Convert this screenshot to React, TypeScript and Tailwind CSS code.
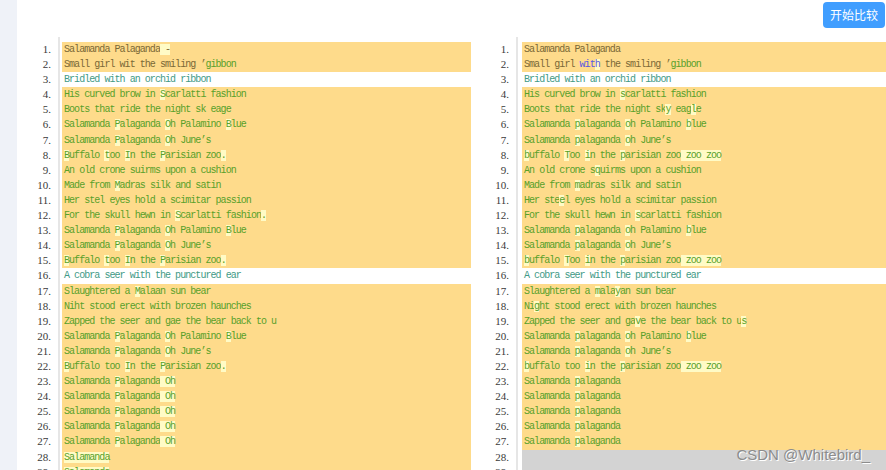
import React from "react";

type Tone = "brown" | "green" | "teal" | "blue";
type Part = { t: string; c?: Tone };
type Row = { bg: "y" | "w" | "g"; parts: Part[] };

const TONE: Record<Tone, string> = {
  brown: "text-[#7a6836]",
  green: "text-[#58a02a]",
  teal: "text-[#3f9a86]",
  blue: "text-[#5656e0]",
};

const BG: Record<Row["bg"], string> = {
  y: "bg-[#fedb8b]",
  w: "bg-white",
  g: "bg-[#d3d3d3]",
};

// plain green line on yellow, [x] marks a changed char
const y = (t: string): Row => ({ bg: "y", parts: [{ t }] });
const teal = (t: string): Row => ({ bg: "w", parts: [{ t, c: "teal" }] });

const L6 = "Salamanda [P]alaganda [O]h Palamino [B]lue";
const L7 = "Salamanda [P]alaganda [O]h June’s";
const L8 = "[B]uffalo [t]oo [I]n the [P]arisian zoo[.]";
const L23 = "Salamanda [P]alaganda[ Oh]";

const LEFT: Row[] = [
  { bg: "y", parts: [{ t: "Salamanda Palaganda[ -]", c: "brown" }] },
  { bg: "y", parts: [{ t: "Small girl wit the smiling ’", c: "brown" }, { t: "gibbon" }] },
  teal("Bridled with an orchid ribbon"),
  y("His curved brow in [S]carlatti fashion"),
  y("Boots that ride the night sk eage"),
  y(L6),
  y(L7),
  y(L8),
  y("An old crone suirms upon a cushion"),
  y("Made from [M]adras silk and satin"),
  y("Her stel eyes hold a scimitar passion"),
  y("For the skull hewn in [S]carlatti fashion[.]"),
  y(L6),
  y(L7),
  y(L8),
  teal("A cobra seer with the punctured ear"),
  y("Slaughtered a [M]alaan sun bear"),
  y("Niht stood erect with brozen haunches"),
  y("Zapped the seer and gae the bear back to u"),
  y(L6),
  y(L7),
  y("[B]uffalo too [I]n the [P]arisian zoo[.]"),
  y(L23),
  y(L23),
  y(L23),
  y(L23),
  y(L23),
  y("[Salamanda]"),
  y("[Salamanda]"),
];

const R6 = "Salamanda [p]alaganda [o]h Palamino [b]lue";
const R7 = "Salamanda [p]alaganda [o]h June’s";
const R8 = "[b]uffalo [T]oo [i]n the [p]arisian zoo[ zoo zoo]";
const R23 = "Salamanda [p]alaganda";

const RIGHT: Row[] = [
  { bg: "y", parts: [{ t: "Salamanda Palaganda", c: "brown" }] },
  {
    bg: "y",
    parts: [
      { t: "Small girl ", c: "brown" },
      { t: "wit[h]", c: "blue" },
      { t: " the smiling ’", c: "brown" },
      { t: "gibbon" },
    ],
  },
  teal("Bridled with an orchid ribbon"),
  y("His curved brow in [s]carlatti fashion"),
  y("Boots that ride the night sk[y] eag[l]e"),
  y(R6),
  y(R7),
  y(R8),
  y("An old crone s[q]uirms upon a cushion"),
  y("Made from [m]adras silk and satin"),
  y("Her ste[e]l eyes hold a scimitar passion"),
  y("For the skull hewn in [s]carlatti fashion"),
  y(R6),
  y(R7),
  y(R8),
  teal("A cobra seer with the punctured ear"),
  y("Slaughtered a [m]ala[y]an sun bear"),
  y("Ni[g]ht stood erect with brozen haunches"),
  y("Zapped the seer and ga[v]e the bear back to u[s]"),
  y(R6),
  y(R7),
  y("[b]uffalo too [i]n the [p]arisian zoo[ zoo zoo]"),
  y(R23),
  y(R23),
  y(R23),
  y(R23),
  y(R23),
  { bg: "g", parts: [] },
  { bg: "g", parts: [] },
];

function Marked({ text }: { text: string }) {
  const bits = text.split(/(\[[^\]]*\])/).filter((b) => b !== "");
  return (
    <>
      {bits.map((b, i) =>
        b.startsWith("[") ? (
          <span key={i} className="bg-[#fffbc6]">
            {b.slice(1, -1)}
          </span>
        ) : (
          <span key={i}>{b}</span>
        )
      )}
    </>
  );
}

function DiffPane({ rows, gutter, pad, grow }: { rows: Row[]; gutter: string; pad: string; grow?: boolean }) {
  return (
    <div className={`flex ${grow ? "flex-1 min-w-0" : "w-[454px] shrink-0"}`}>
      {/* line numbers */}
      <div className={`${gutter} shrink-0 pt-[5px] pr-[7px] text-right font-['Liberation_Serif',serif] text-[11px] text-[#3a3a3a]`}>
        {rows.map((_, i) => (
          <div key={i} className="h-[15.1px] leading-[15.1px]">
            {i + 1}.
          </div>
        ))}
      </div>
      {/* text */}
      <div className={`flex-1 min-w-0 border-l-2 border-[#e6e6e6] ${pad} pt-[5px] font-['Liberation_Mono',monospace] text-[10px] tracking-[-0.95px]`}>
        {rows.map((row, i) => (
          <div
            key={i}
            className={`h-[15.1px] leading-[15.1px] overflow-hidden whitespace-pre pl-[2px] ${BG[row.bg]}`}
          >
            {row.parts.map((p, j) => (
              <span key={j} className={TONE[p.c ?? "green"]}>
                <Marked text={p.t} />
              </span>
            ))}
          </div>
        ))}
      </div>
    </div>
  );
}

export default function App() {
  return (
    <div className="relative flex w-[886px] h-[470px] overflow-hidden bg-white">
      <div className="w-[17px] shrink-0 bg-[#eff2f8]" />
      <div className="flex-1 min-w-0 flex flex-col">
        {/* toolbar */}
        <div className="h-[37px] shrink-0 flex justify-end items-start">
          <button className="mt-[2px] mr-[1px] h-[26px] w-[62px] rounded-[4px] bg-[#409eff] text-white text-[12px] font-['Noto_Sans_CJK_SC',sans-serif]">
            开始比较
          </button>
        </div>
        {/* two diff panes */}
        <div className="flex-1 min-h-0 flex overflow-hidden">
          <DiffPane rows={LEFT} gutter="w-[41px]" pad="pl-[2px]" />
          <DiffPane rows={RIGHT} gutter="w-[45px]" pad="pl-[4px]" grow />
        </div>
      </div>
      {/* page watermark */}
      <div className="absolute right-[16px] top-[444px] font-['Liberation_Sans',sans-serif] text-[15px] text-[#8c8c8c] [text-shadow:1px_1px_0_#ffffff]">
        CSDN @Whitebird_
      </div>
    </div>
  );
}
